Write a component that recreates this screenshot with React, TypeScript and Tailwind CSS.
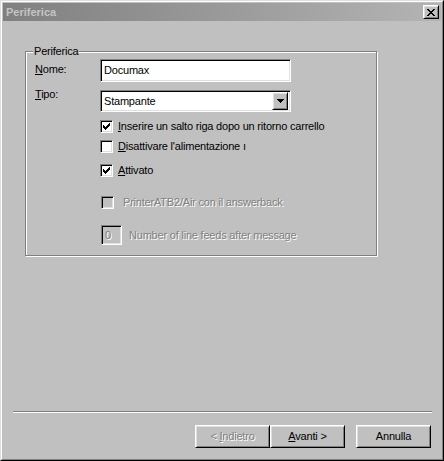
import React from "react";

function Raised({ className = "", children }: { className?: string; children?: React.ReactNode }) {
  return (
    <div
      className={
        "box-border border border-t-white border-l-white border-r-black border-b-black bg-[#c0c0c0] shadow-[inset_1px_1px_0_#dfdfdf,inset_-1px_-1px_0_#808080] " +
        className
      }
    >
      {children}
    </div>
  );
}

function Sunken({ className = "", children }: { className?: string; children?: React.ReactNode }) {
  return (
    <div
      className={
        "box-border border border-t-[#808080] border-l-[#808080] border-r-white border-b-white shadow-[inset_1px_1px_0_#000,inset_-1px_-1px_0_#dfdfdf] " +
        className
      }
    >
      {children}
    </div>
  );
}

function Check({ checked, disabled }: { checked?: boolean; disabled?: boolean }) {
  return (
    <Sunken className={"w-[13px] h-[13px] shrink-0 relative " + (disabled ? "bg-[#c0c0c0]" : "bg-white")}>
      {checked && (
        <svg className="absolute left-[2px] top-[2px]" width="7" height="7" viewBox="0 0 7 7" shapeRendering="crispEdges">
          <path
            d="M6 0h1v3H6v1H5v1H4v1H3v1H2V6H1V5H0V2h1v1h1v1h1V3h1V2h1V1h1z"
            fill="#000"
          />
        </svg>
      )}
    </Sunken>
  );
}

export default function App() {
  const disabledText = "text-[#808080] [text-shadow:1px_1px_0_#fff]";
  return (
    <div className="w-[444px] h-[461px] font-['Liberation_Sans',Arial,sans-serif] text-[11px] leading-[13px] tracking-[-0.2px] text-black select-none">
      <div className="w-full h-full box-border border border-t-[#dfdfdf] border-l-[#dfdfdf] border-r-black border-b-black">
        <div className="w-full h-full box-border border border-t-white border-l-white border-r-[#808080] border-b-[#808080] bg-[#c0c0c0] p-px flex flex-col">
          {/* Title bar */}
          <div className="h-[18px] shrink-0 flex items-center justify-between pl-[3px] pr-[2px] bg-linear-to-r from-[#808080] to-[#b4b4b4]">
            <span className="font-bold text-[11px] tracking-normal text-[#c4c4c4]">Periferica</span>
            <Raised className="w-[16px] h-[14px] flex items-center justify-center">
              <svg width="8" height="7" viewBox="0 0 8 7" shapeRendering="crispEdges">
                <path d="M0 0h2v1h1v1h2V1h1V0h2v1H7v1H6v1H5v1h1v1h1v1h1v1H6V6H5V5H3v1H2v1H0V6h1V5h1V4h1V3H2V2H1V1H0z" fill="#000" />
              </svg>
            </Raised>
          </div>

          {/* Body */}
          <div className="flex-1 flex flex-col">
            {/* Group box */}
            <div className="relative mt-[30px] ml-[22px] w-[352px] h-[205px] box-border border border-[#808080] shadow-[inset_1px_1px_0_#fff,1px_1px_0_#fff] pt-[7px] pl-[9px]">
              <span className="absolute left-[7px] top-[-7px] px-[1px] bg-[#c0c0c0]">Periferica</span>

              {/* Nome */}
              <div className="flex items-start">
                <span className="w-[65px] mt-[4px]">
                  <u>N</u>ome:
                </span>
                <Sunken className="w-[191px] h-[23px] bg-white flex items-center pl-[3px]">Documax</Sunken>
              </div>

              {/* Tipo */}
              <div className="flex items-start mt-[8px]">
                <span className="w-[65px] mt-[-2px]">
                  <u>T</u>ipo:
                </span>
                <Sunken className="w-[191px] h-[22px] bg-white flex items-center justify-between pl-[3px] pr-[2px]">
                  <span>Stampante</span>
                  <Raised className="w-[16px] h-[18px] flex items-center justify-center">
                    <svg width="7" height="4" viewBox="0 0 7 4" shapeRendering="crispEdges">
                      <path d="M0 0h7v1H6v1H5v1H4v1H3V3H2V2H1V1H0z" fill="#000" />
                    </svg>
                  </Raised>
                </Sunken>
              </div>

              {/* Checkboxes */}
              <div className="ml-[65px] flex flex-col">
                <div className="flex items-center gap-[5px] mt-[8px]">
                  <Check checked />
                  <span>
                    <u>I</u>nserire un salto riga dopo un ritorno carrello
                  </span>
                </div>
                <div className="flex items-center gap-[5px] mt-[7px]">
                  <Check />
                  <span>
                    <u>D</u>isattivare l'alimentazione ı
                  </span>
                </div>
                <div className="flex items-center gap-[5px] mt-[11px]">
                  <Check checked />
                  <span>
                    <u>A</u>ttivato
                  </span>
                </div>
                <div className="flex items-center gap-[9px] mt-[19px] ml-[1px]">
                  <Check disabled />
                  <span className={disabledText}>PrinterATB2/Air con il answerback</span>
                </div>
                <div className="flex items-center gap-[7px] mt-[16px] ml-[1px]">
                  <Sunken className="w-[21px] h-[20px] bg-[#c0c0c0] flex items-center pl-[3px]">
                    <span className={disabledText}>0</span>
                  </Sunken>
                  <span className={disabledText}>Number of line feeds after message</span>
                </div>
              </div>
            </div>

            <div className="flex-1" />

            {/* Separator */}
            <div className="ml-[10px] mr-[9px] h-[2px] border-t border-t-[#808080] border-b border-b-white box-border" />

            {/* Buttons */}
            <div className="flex justify-end mt-[12px] mb-[10px] mr-[10px]">
              <Raised className="w-[75px] h-[23px] flex items-center justify-center">
                <span className={disabledText}>
                  &lt; <u>I</u>ndietro
                </span>
              </Raised>
              <Raised className="w-[75px] h-[23px] flex items-center justify-center">
                <span>
                  <u>A</u>vanti &gt;
                </span>
              </Raised>
              <Raised className="w-[75px] h-[23px] flex items-center justify-center ml-[11px]">
                <span>Annulla</span>
              </Raised>
            </div>
          </div>
        </div>
      </div>
    </div>
  );
}
